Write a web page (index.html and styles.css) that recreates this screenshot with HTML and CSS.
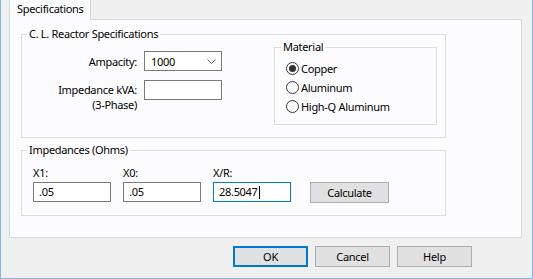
FILE: index.html
```html
<!DOCTYPE html>
<html>
<head>
  <meta charset="utf-8">
  <title>Reactor Specifications</title>
  <link rel="stylesheet" href="styles.css">
</head>
<body>
  <div class="window">
    <div class="tabs">
      <div class="tab">Specifications</div>
    </div>

    <div class="panel">
      <fieldset class="group spec">
        <legend>C. L. Reactor Specifications</legend>
        <div class="spec-row">
          <div class="fields">
            <span class="field-label">Ampacity:</span>
            <div class="combo">
              <span class="combo-value">1000</span>
              <svg class="chevron" width="9" height="5" viewBox="0 0 9 5">
                <path d="M0.5 0.5 L4.5 4.5 L8.5 0.5" fill="none" stroke="#606060" stroke-width="1"/>
              </svg>
            </div>
            <span class="field-label multi">Impedance kVA:<br>(3-Phase)</span>
            <div class="text-box"></div>
          </div>

          <fieldset class="group material">
            <legend>Material</legend>
            <div class="radio-row"><span class="radio checked"></span>Copper</div>
            <div class="radio-row"><span class="radio"></span>Aluminum</div>
            <div class="radio-row"><span class="radio"></span>High-Q Aluminum</div>
          </fieldset>
        </div>
      </fieldset>

      <fieldset class="group impedances">
        <legend>Impedances (Ohms)</legend>
        <div class="imp-row">
          <div class="imp-field">
            <span class="imp-label">X1:</span>
            <div class="text-box">.05</div>
          </div>
          <div class="imp-field">
            <span class="imp-label">X0:</span>
            <div class="text-box">.05</div>
          </div>
          <div class="imp-field">
            <span class="imp-label">X/R:</span>
            <div class="text-box focused">28.5047<span class="caret"></span></div>
          </div>
          <button type="button" class="btn calc">Calculate</button>
        </div>
      </fieldset>
    </div>

    <div class="buttons">
      <button type="button" class="btn default">OK</button>
      <button type="button" class="btn">Cancel</button>
      <button type="button" class="btn">Help</button>
    </div>
  </div>
</body>
</html>
```

FILE: styles.css
```css
* {
  box-sizing: border-box;
}
body {
  margin: 0;
  font-family: "Noto Sans", sans-serif;
  font-size: 11px;
  letter-spacing: -0.3px;
  color: #000;
}
.window {
  width: 533px;
  height: 279px;
  background-color: #f0f0f0;
  border: 1px solid #7fb6ee;
  border-top: none;
  padding: 0 10px 0 8px;
  display: flex;
  flex-direction: column;
}
.tabs {
  display: flex;
  height: 19px;
}
.tab {
  width: 82px;
  height: 20px;
  background-color: #fcfcfe;
  border-left: 1px solid #d9d9d9;
  border-right: 1px solid #d9d9d9;
  padding-left: 7px;
  line-height: 18px;
  position: relative;
  z-index: 1;
}
.panel {
  height: 219px;
  border: 1px solid #d9d9d9;
  background-color: #fcfcfe;
  padding: 0 0 0 11px;
}

/* group boxes */
.group {
  margin: 0;
  padding: 0;
  border: 1px solid #dcdcdc;
  min-inline-size: 0;
}
.group legend {
  padding: 0 2px;
  margin-left: 5px;
  line-height: 14px;
}
.spec {
  width: 425px;
  margin-top: 7px;
  padding-bottom: 12px;
}
.spec-row {
  display: flex;
  align-items: flex-start;
}
.fields {
  display: grid;
  grid-template-columns: 115px 78px;
  column-gap: 7px;
  row-gap: 9px;
  margin-top: 10px;
}
.field-label {
  text-align: right;
  align-self: center;
}
.field-label.multi {
  align-self: start;
  line-height: 15px;
  margin-top: 2px;
}
.combo {
  height: 20px;
  border: 1px solid #7a7a7a;
  background-color: #fff;
  display: flex;
  align-items: center;
  justify-content: space-between;
  padding: 0 5px 0 6px;
}
.chevron {
  display: block;
}
.text-box {
  height: 20px;
  width: 78px;
  border: 1px solid #7a7a7a;
  background-color: #fff;
  padding-left: 5px;
  line-height: 18px;
  display: flex;
  align-items: center;
}
.text-box.focused {
  border-color: #0078d7;
}
.caret {
  width: 1px;
  height: 13px;
  background-color: #000;
  margin-left: 1px;
}

.material {
  width: 163px;
  margin-left: 52px;
  margin-top: -1px;
  padding: 5px 0 8px 11px;
}
.material legend {
  margin-left: -5px;
}
.radio-row {
  height: 19px;
  display: flex;
  align-items: center;
  gap: 2px;
}
.radio {
  width: 13px;
  height: 13px;
  border: 1px solid #333;
  border-radius: 50%;
  background-color: #fff;
  display: flex;
  align-items: center;
  justify-content: center;
}
.radio.checked::after {
  content: "";
  width: 7px;
  height: 7px;
  border-radius: 50%;
  background-color: #333;
}

.impedances {
  width: 425px;
  margin-top: 5px;
  padding: 9px 0 13px 11px;
}
.impedances legend {
  margin-left: -6px;
}
.imp-row {
  display: flex;
  align-items: flex-end;
}
.imp-field {
  display: flex;
  flex-direction: column;
  gap: 2px;
  margin-right: 12px;
}
.imp-label {
  line-height: 14px;
}
.imp-field:nth-child(3) {
  margin-right: 19px;
}

/* buttons */
.btn {
  font-family: inherit;
  font-size: 11px;
  letter-spacing: inherit;
  color: #000;
  width: 75px;
  height: 21px;
  padding: 0;
  background-color: #e1e1e1;
  border: 1px solid #adadad;
  border-radius: 0;
}
.btn.calc {
  width: 79px;
  margin-bottom: -1px;
}
.btn.default {
  border: 2px solid #0078d7;
}
.buttons {
  display: flex;
  justify-content: flex-end;
  gap: 7px;
  margin-top: 8px;
  padding-right: 50px;
}
```
